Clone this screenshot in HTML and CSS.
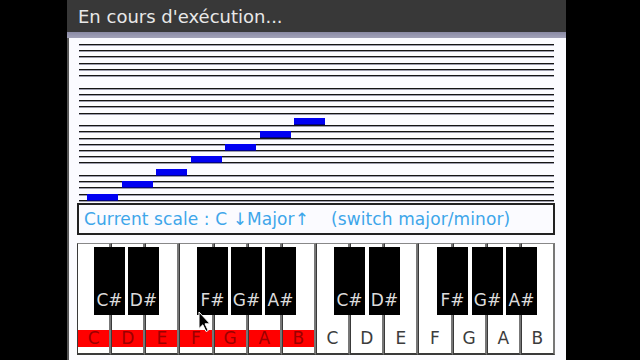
FILE: index.html
```html
<!DOCTYPE html>
<html lang="fr">
<head>
    <meta charset="UTF-8">
    <title>En cours d'exécution...</title>
    <link rel="stylesheet" href="styles.css">
</head>
<body>

<div class="screen">
    <div class="titlebar">En cours d'exécution...</div>
    <div class="strip"></div>

    <div class="content">
        <div class="staff">
            <div class="line"></div><div class="line"></div><div class="line"></div>
            <div class="line"></div><div class="line"></div><div class="line"></div>
            <div class="line off"></div>
            <div class="line"></div><div class="line"></div><div class="line"></div>
            <div class="line"></div><div class="line"></div>
            <div class="line off"></div>
            <div class="line"></div><div class="line"></div><div class="line"></div>
            <div class="line"></div><div class="line"></div><div class="line"></div>
            <div class="line"></div>
            <div class="line off"></div>
            <div class="line"></div><div class="line"></div><div class="line"></div>
            <div class="line"></div><div class="line"></div>

            <div class="note" style="left:8px;top:150px"></div>
            <div class="note" style="left:43px;top:137px"></div>
            <div class="note" style="left:77px;top:125px"></div>
            <div class="note" style="left:112px;top:112px"></div>
            <div class="note" style="left:146px;top:100px"></div>
            <div class="note" style="left:181px;top:87px"></div>
            <div class="note" style="left:215px;top:74px"></div>
        </div>

        <div class="scale-box">Current scale : C ↓Major↑    (switch major/minor)</div>

        <div class="keyboard">
            <div class="key on"><span class="spacer"></span><span class="label">C</span><span class="foot"></span></div>
            <div class="key on"><span class="spacer"></span><span class="label">D</span><span class="foot"></span></div>
            <div class="key on"><span class="spacer"></span><span class="label">E</span><span class="foot"></span></div>
            <div class="key on"><span class="spacer"></span><span class="label">F</span><span class="foot"></span></div>
            <div class="key on"><span class="spacer"></span><span class="label">G</span><span class="foot"></span></div>
            <div class="key on"><span class="spacer"></span><span class="label">A</span><span class="foot"></span></div>
            <div class="key on"><span class="spacer"></span><span class="label">B</span><span class="foot"></span></div>
            <div class="key"><span class="spacer"></span><span class="label">C</span><span class="foot"></span></div>
            <div class="key"><span class="spacer"></span><span class="label">D</span><span class="foot"></span></div>
            <div class="key"><span class="spacer"></span><span class="label">E</span><span class="foot"></span></div>
            <div class="key"><span class="spacer"></span><span class="label">F</span><span class="foot"></span></div>
            <div class="key"><span class="spacer"></span><span class="label">G</span><span class="foot"></span></div>
            <div class="key"><span class="spacer"></span><span class="label">A</span><span class="foot"></span></div>
            <div class="key"><span class="spacer"></span><span class="label">B</span><span class="foot"></span></div>

            <div class="black" style="left:17px">C#</div>
            <div class="black" style="left:51px">D#</div>
            <div class="black" style="left:120px">F#</div>
            <div class="black" style="left:154px">G#</div>
            <div class="black" style="left:188px">A#</div>
            <div class="black" style="left:257px">C#</div>
            <div class="black" style="left:292px">D#</div>
            <div class="black" style="left:360px">F#</div>
            <div class="black" style="left:395px">G#</div>
            <div class="black" style="left:429px">A#</div>

            <svg class="cursor" width="13" height="22" viewBox="0 0 13 22">
                <path d="M1 1 L1 17.5 L4.8 13.8 L8 20.5 L10.2 19.5 L7 12.8 L12 12.8 Z" fill="#000" stroke="#fff" stroke-width="1"/>
            </svg>
        </div>
    </div>
</div>

</body>
</html>
```

FILE: styles.css
```css
body {
    margin: 0;
    background-color: #000;
    font-family: "DejaVu Sans", sans-serif;
}
.screen {
    margin-left: 67px;
    width: 499px;
    height: 360px;
    overflow: hidden;
    background-color: #fbfbff;
}
.titlebar {
    height: 32px;
    line-height: 33px;
    padding-left: 11px;
    background-color: #383838;
    color: #e8e8e8;
    font-size: 18px;
}
.strip {
    height: 6px;
    background: linear-gradient(#8a8aa4, #a2a2b8);
}
.content {
    border-left: 2px solid #555;
    height: 322px;
    padding: 6px 0 0 8px;
    box-sizing: border-box;
}
.staff {
    position: relative;
    margin-left: 2px;
    width: 475px;
    height: 158px;
    display: flex;
    flex-direction: column;
    justify-content: space-between;
}
.line {
    height: 2px;
    background: linear-gradient(#151515 50%, #9c9cac 50%);
}
.line.off {
    visibility: hidden;
}
.note {
    position: absolute;
    width: 31px;
    height: 6px;
    background-color: #0000f2;
    border-bottom: 1px solid #00008a;
}
.scale-box {
    margin-top: 1px;
    width: 478px;
    height: 32px;
    box-sizing: border-box;
    border: 2px solid #222;
    padding-left: 5px;
    line-height: 28px;
    font-size: 17px;
    letter-spacing: 0.1px;
    color: #3ea6ea;
    white-space: pre;
}
.keyboard {
    position: relative;
    margin-top: 8px;
    width: 478px;
    height: 112px;
    display: flex;
}
.key {
    flex: 1;
    display: flex;
    flex-direction: column;
    background-color: #fff;
    border: 1px solid #3a3a3a;
    border-top-color: #888;
    border-right: 2px solid #777;
    border-bottom-width: 2px;
}
.spacer {
    flex: 1;
}
.label {
    height: 17px;
    line-height: 17px;
    text-align: center;
    font-size: 17px;
    color: #3c3c3c;
}
.key.on .label {
    background-color: #ff0000;
    color: #9a0000;
}
.foot {
    height: 6px;
}
.black {
    position: absolute;
    top: 4px;
    width: 31px;
    height: 68px;
    box-sizing: border-box;
    background-color: #000;
    color: #dcdcdc;
    font-size: 17px;
    text-align: center;
    display: flex;
    flex-direction: column;
    justify-content: flex-end;
    padding-bottom: 6px;
    line-height: 17px;
}
.cursor {
    position: absolute;
    left: 121px;
    top: 68px;
}
```
